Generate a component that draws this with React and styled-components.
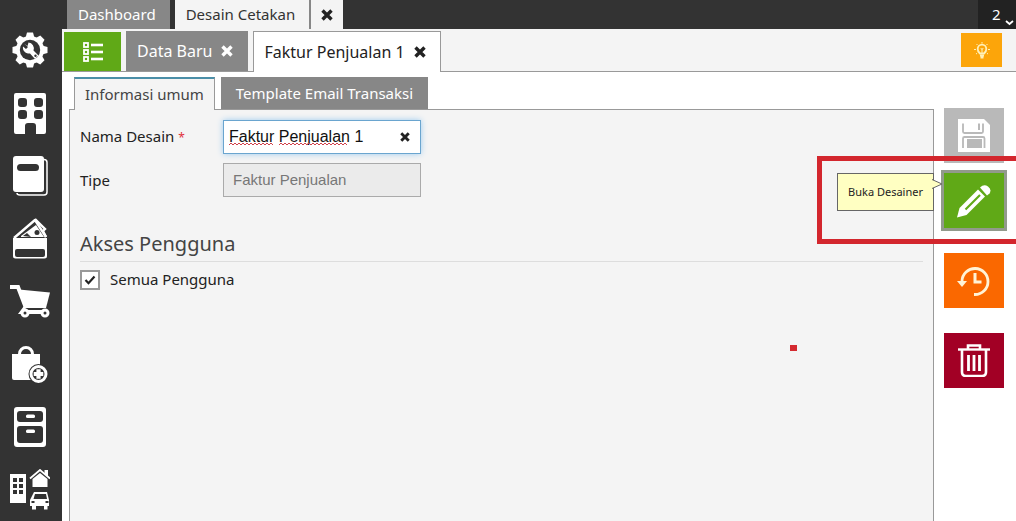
import React, { useState } from 'react'
import styled, { createGlobalStyle, css } from 'styled-components'

const GlobalStyle = createGlobalStyle`
    *, *::before, *::after { box-sizing: border-box; }
    body {
        margin: 0;
        background: #fff;
        color: #222;
        font-family: "Noto Sans", "Open Sans", sans-serif;
        font-size: 15px;
        line-height: 20px;
        overflow: hidden;
    }
    button, input { font: inherit; color: inherit; margin: 0; }
    button { border: 0; padding: 0; background: none; cursor: pointer; }
    svg { display: block; }
`;

const Layout = styled.div`
    display: flex;
    min-height: 100vh;
`;

const Sidebar = styled.nav`
    flex: 0 0 62px;
    height: 100vh;
    padding: 19px 3px 0 0;
    display: flex;
    flex-direction: column;
    background: #333;
    color: #fff;
`;

const SidebarButton = styled.button`
    flex: 1;
    display: flex;
    align-items: center;
    justify-content: center;
`;

const Main = styled.div`
    flex: 1;
    min-width: 0;
    display: flex;
    flex-direction: column;
`;

const TopBar = styled.header`
    display: flex;
    height: 29px;
    padding-left: 5px;
    background: #333;
`;

const TopTab = styled.button`
    padding: 0 14px 2px 11px;
    margin-right: ${props => props.$active ? '0' : '5px'};
    background: ${props => props.$active ? '#f4f4f4' : '#878787'};
    color: ${props => props.$active ? '#333' : '#fff'};
`;

const TopClose = styled.button`
    width: 34px;
    display: flex;
    align-items: center;
    justify-content: center;
    border-left: 2px solid #878787;
    background: #f4f4f4;
`;

const UserMenu = styled.button`
    width: 38px;
    margin-left: auto;
    padding: 0 2px 2px 14px;
    display: flex;
    align-items: center;
    justify-content: space-between;
    background: #222;
    color: #fff;
    svg { margin-top: 18px; }
`;

const TabBar = styled.div`
    display: flex;
    align-items: flex-end;
    gap: 5px;
    height: 43px;
    padding: 0 14px 0 2px;
    background: #f4f4f4;
    border-bottom: 1px solid #999;
`;

const ListButton = styled.button`
    width: 57px;
    height: 39px;
    display: flex;
    align-items: center;
    justify-content: center;
    background: #60a917;
    color: #fff;
`;

const DocTab = styled.div`
    display: flex;
    align-items: center;
    gap: 9px;
    height: 40px;
    padding: 0 15px 0 11px;
    font-size: 16px;
    background: #878787;
    color: #fff;
    ${props => props.$active && css`
        height: 41px;
        margin-bottom: -1px;
        padding: 0 14px 0 10px;
        border: 1px solid #999;
        border-bottom: 0;
        background: #fff;
        color: #222;
    `}
`;

const TipButton = styled.button`
    width: 41px;
    height: 34px;
    margin: 0 0 4px auto;
    display: flex;
    align-items: center;
    justify-content: center;
    background: #fca50a;
    color: #fff0b8;
`;

const Content = styled.main`
    flex: 1;
    display: flex;
    padding: 5px 12px 0 7px;
`;

const FormArea = styled.section`
    flex: 1;
    min-width: 0;
    display: flex;
    flex-direction: column;
`;

const SubTabs = styled.div`
    display: flex;
    gap: 6px;
    padding-left: 5px;
`;

const SubTab = styled.button`
    height: 32px;
    padding: 0 15px;
    background: #878787;
    color: #fff;
    ${props => props.$active && css`
        height: 33px;
        margin-bottom: -1px;
        padding: 0 10px 2px;
        border: 1px solid #999;
        border-top: 2px solid #4b8fa8;
        border-bottom: 0;
        background: #f4f4f4;
        color: #444;
        position: relative;
        z-index: 1;
    `}
`;

const Panel = styled.div`
    flex: 1;
    position: relative;
    padding: 10px 10px 0;
    border: 1px solid #999;
    border-bottom: 0;
    background: #f4f4f4;
`;

const FormRow = styled.div`
    display: grid;
    grid-template-columns: 143px 198px;
    align-items: center;
    margin-bottom: 9px;
`;

const Required = styled.span`
    color: #e0303a;
    font-size: 12px;
`;

const InputWrap = styled.div`
    position: relative;
`;

const TextInput = styled.input`
    display: block;
    width: 100%;
    height: 34px;
    padding: 0 32px 0 5px;
    border: 1px solid #6aa5cf;
    outline: 0;
    background: #fff;
    color: #111;
    font: 16px/20px "Liberation Sans", Arial, sans-serif;
    box-shadow: 0 0 6px #9ccbf0;
    &:disabled {
        padding: 0 9px 2px;
        border-color: #aaa;
        background: #ebebeb;
        color: #777;
        font-size: 15px;
        box-shadow: none;
    }
`;

const ClearButton = styled.button`
    position: absolute;
    top: 12px;
    right: 11px;
`;

const SpellMarks = styled.svg`
    position: absolute;
    top: 22px;
    left: 6px;
    pointer-events: none;
`;

const SectionTitle = styled.h2`
    margin: 33px 0 8px;
    padding-bottom: 3px;
    border-bottom: 1px solid #ddd;
    color: #444;
    font-size: 20px;
    line-height: 28px;
    font-weight: 400;
`;

const CheckLabel = styled.label`
    display: flex;
    align-items: flex-start;
    gap: 10px;
    line-height: 18px;
`;

const Checkbox = styled.input`
    appearance: none;
    width: 20px;
    height: 20px;
    border: 2px solid #999;
    background: #fff;
    &:checked {
        background: #fff url("data:image/svg+xml,%3Csvg xmlns='http://www.w3.org/2000/svg' viewBox='0 0 16 16'%3E%3Cpath d='M3.5 8l3 3.2L12.5 4.500' fill='none' stroke='%23222' stroke-width='2.200'/%3E%3C/svg%3E");
    }
`;

const Actions = styled.aside`
    display: flex;
    flex-direction: column;
    gap: 25px;
    margin: 31px 0 0 10px;
`;

const ActionButton = styled.button`
    width: 60px;
    height: 55px;
    display: flex;
    align-items: center;
    justify-content: center;
    background: ${props => props.$color};
    color: #fff;
    &:disabled { color: #fff; cursor: default; }
`;

const DesignerItem = styled.div`
    position: relative;
    margin-top: -15px;
    ${ActionButton} { outline: 3px solid #929a8c; }
`;

const Tooltip = styled.div`
    position: absolute;
    top: 0;
    right: 70px;
    height: 38px;
    padding: 0 10px;
    display: flex;
    align-items: center;
    border: 1px solid #666;
    background: #ffffc2;
    color: #222;
    font-size: 11px;
    white-space: nowrap;
    z-index: 2;
    svg {
        position: absolute;
        top: 4px;
        left: 100%;
        margin-left: -1px;
    }
`;

// runs past the right edge of the window
const Highlight = styled.div`
    position: absolute;
    top: -17px;
    right: -20px;
    width: 207px;
    height: 88px;
    border: 5px solid #d3262d;
    pointer-events: none;
    z-index: 1;
`;

const Marker = styled.span`
    position: absolute;
    top: 235px;
    right: 136px;
    width: 7px;
    height: 6px;
    background: #d42a30;
`;

const CrossIcon = ({ size = 12 }) => (
    <svg width={size} height={size} viewBox="0 0 12 12" aria-hidden="true">
        <path d="M1.500 1.500L10.500 10.500M10.500 1.500L1.500 10.500" stroke="currentColor" strokeWidth="3.4" />
    </svg>
);

const SettingsIcon = () => (
    <svg width="36" height="36" viewBox="0 0 36 36" fill="currentColor">
        {[0, 45, 90, 135].map(angle => (
            <path key={angle} d="M13.500 6L15 .5h6L22.500 6v24L21 35.500h-6L13.500 30z" transform={`rotate(${angle} 18 18)`} />
        ))}
        <circle cx="18" cy="18" r="14" />
        <circle cx="18" cy="18" r="10.200" fill="#333" />
        <path d="M12 11.500l3.500 2.500 1-3.500a6 6 0 0 1 5 8l5 5-3.500 3.500-5-5.500a6 6 0 0 1-7-7l3 2.500 2-2z" />
        <circle cx="23.500" cy="23.700" r="1.200" fill="#333" />
    </svg>
);

const BuildingIcon = () => (
    <svg width="34" height="41" viewBox="0 0 34 41">
        <path fill="currentColor" d="M3 0h28a2 2 0 0 1 2 2v37a2 2 0 0 1-2 2h-8v-8q0-3-3-3h-5q-3 0-3 3v8H3a2 2 0 0 1-2-2V2a2 2 0 0 1 2-2z" />
        <g fill="#333">
            <rect x="5" y="5" width="9" height="9" rx="3" />
            <rect x="21" y="5" width="9" height="9" rx="3" />
            <rect x="5" y="17" width="9" height="9" rx="3" />
            <rect x="21" y="17" width="9" height="9" rx="3" />
        </g>
    </svg>
);

const BookIcon = () => (
    <svg width="36" height="40" viewBox="0 0 36 40">
        <path d="M32 3.500q3 0 3 3V36q0 3-3 3H8q-3 0-3-2" fill="none" stroke="currentColor" strokeWidth="1.500" />
        <rect x="1" y="0" width="31" height="36" rx="3" fill="currentColor" />
        <rect x="5" y="8" width="22" height="7" rx="3.500" fill="#333" />
    </svg>
);

const WalletIcon = () => (
    <svg width="36" height="41" viewBox="0 0 36 41">
        <path d="M2 20L23 2l11 17" fill="none" stroke="currentColor" strokeWidth="2.400" strokeLinejoin="round" />
        <path d="M23 1l4 4 6 6-2 2 3 6" fill="none" stroke="currentColor" strokeWidth="2.400" />
        <path d="M9 18L24 7l8 12H9z" fill="currentColor" />
        <circle cx="25" cy="14.500" r="2.500" fill="#333" />
        <path d="M11 18l4-3 4 4z" fill="#333" />
        <path d="M1 20h34v18a2.500 2.500 0 0 1-2.500 2.500h-29A2.500 2.500 0 0 1 1 38z" fill="currentColor" />
        <rect x="3" y="31" width="30" height="8" rx="2" fill="#333" />
    </svg>
);

const CartIcon = () => (
    <svg width="42" height="34" viewBox="0 0 42 34">
        <path d="M1 3h8l8 21M16 24l-3 4h24" fill="none" stroke="currentColor" strokeWidth="4" />
        <path d="M10 5.500l31 3L37 24H15z" fill="currentColor" />
        <g fill="#333" stroke="currentColor" strokeWidth="3">
            <circle cx="16" cy="29" r="3" />
            <circle cx="36" cy="29" r="3" />
        </g>
    </svg>
);

const BagIcon = () => (
    <svg width="36" height="39" viewBox="0 0 36 39">
        <path d="M7.500 12V9a6.500 6.500 0 0 1 13 0v3" fill="none" stroke="currentColor" strokeWidth="3" />
        <path d="M0 9h28v26H2a2 2 0 0 1-2-2z" fill="currentColor" />
        <circle cx="26.500" cy="29" r="10" fill="#333" />
        <circle cx="26.500" cy="29" r="7.500" fill="#333" stroke="currentColor" strokeWidth="3" />
        <path d="M26.500 24.200v9.600M21.700 29h9.600" stroke="currentColor" strokeWidth="4.200" />
    </svg>
);

const CabinetIcon = () => (
    <svg width="34" height="40" viewBox="0 0 34 40">
        <rect x="1" y="0" width="32" height="40" rx="3" fill="currentColor" />
        <rect x="4" y="4" width="26" height="11" rx="3" fill="#333" />
        <rect x="4" y="19" width="26" height="17" rx="3" fill="#333" />
        <rect x="13" y="7.500" width="9" height="3.500" rx="1.500" fill="currentColor" />
        <rect x="13" y="22.500" width="9" height="3.500" rx="1.500" fill="currentColor" />
    </svg>
);

const AssetsIcon = () => (
    <svg width="40" height="41" viewBox="0 0 40 41">
        <path d="M0 5h16v29H0z" fill="currentColor" />
        <g fill="#333">
            {[9, 15, 21].map(y => <path key={y} d={`M3 ${y}h4v4H3zM9 ${y}h4v4H9z`} />)}
        </g>
        <path d="M20 9.500L30 1l10 8.500" fill="none" stroke="currentColor" strokeWidth="1.800" />
        <path d="M34.500 1H38v7l-3.500-3z" fill="currentColor" />
        <path d="M22.500 10L30 4l7.500 6v8h-15z" fill="currentColor" />
        <path d="M24 23h13l2 8v6h-1.500v3.500H34V37h-8v3.500h-4V37h-2v-6z" fill="currentColor" />
        <path d="M25 25h11l1 5H23.500z" fill="#333" />
        <path d="M21.500 32h3v2h-3zM35.500 32h3v2h-3z" fill="#333" />
    </svg>
);

const ListIcon = () => (
    <svg width="20" height="20" viewBox="0 0 20 20" fill="none" stroke="currentColor">
        {[1, 8, 15].map(y => (
            <React.Fragment key={y}>
                <rect x="1" y={y} width="4" height="4" strokeWidth="1.800" />
                <path d={`M8 ${y + 2}H20`} strokeWidth="2.600" />
            </React.Fragment>
        ))}
    </svg>
);

const BulbIcon = () => (
    <svg width="16" height="17" viewBox="0 0 16 17" fill="none" stroke="currentColor">
        <path d="M6 11.500Q3.500 9 3.700 7a4.300 4.300 0 0 1 8.600 0q.2 2-2.300 4.500z" strokeWidth="1.800" />
        <path d="M8 11V7M6.700 6L8 7.500 9.300 6" strokeWidth="1" />
        <path d="M6 13.500h4M6.500 15.500h3" strokeWidth="2" />
        <path d="M8 0v1.500M2.500 2l1 1M13.500 2l-1 1M0 7.500h2M14 7.500h2M2 12l1-.7M14 12l-1-.7" />
    </svg>
);

const SaveIcon = () => (
    <svg width="34" height="33" viewBox="0 0 34 33">
        <path d="M1 0h26l6 6v27H1z" fill="currentColor" />
        <path d="M6 4.500v8q0 1.500 1.500 1.500h17q1.500 0 1.500-1.500v-8M6 29V19.500q0-1.500 1.500-1.500h18.500q1.500 0 1.500 1.500V29" fill="none" stroke="#b9b9b9" strokeWidth="1.800" />
        <path d="M10 20h15v9H10zM21 4.500h2V11h-2z" fill="#b9b9b9" />
    </svg>
);

const PencilIcon = () => (
    <svg width="34" height="34" viewBox="0 0 34 34" fill="currentColor">
        <path d="M0 33.500L2.500 24 21 5.500l7 7L9.500 31z" />
        <path d="M23 3.500q4-4 8-1t1.500 7L30 11.500z" />
        <path d="M8.500 25.500L23 11" stroke="#60a917" strokeWidth="2.200" />
    </svg>
);

const HistoryIcon = () => (
    <svg width="34" height="30" viewBox="0 0 34 30" fill="none" stroke="#fff3d6">
        <path d="M5 15A13 13 0 1 1 18 28.500h-1" strokeWidth="2.800" />
        <path d="M0 15h10l-5 6z" fill="#fff3d6" stroke="none" />
        <path d="M18 7v9h6.500" strokeWidth="3" />
    </svg>
);

const TrashIcon = () => (
    <svg width="32" height="33" viewBox="0 0 32 33" fill="none" stroke="currentColor">
        <path d="M0 5.500h32" strokeWidth="2.400" />
        <path d="M10 5V1.500h12V5" strokeWidth="2.600" />
        <path d="M4 6v22q0 4 4 4h16q4 0 4-4V6" strokeWidth="2.600" />
        <path d="M10.500 11v16M16 11v16M21.500 11v16" strokeWidth="2.800" />
    </svg>
);

const menu = [
    { name: "Pengaturan", Icon: SettingsIcon },
    { name: "Perusahaan", Icon: BuildingIcon },
    { name: "Buku Besar", Icon: BookIcon },
    { name: "Kas & Bank", Icon: WalletIcon },
    { name: "Penjualan", Icon: CartIcon },
    { name: "Pembelian", Icon: BagIcon },
    { name: "Persediaan", Icon: CabinetIcon },
    { name: "Aset Tetap", Icon: AssetsIcon }
];

export default function App() {
    const [name, setName] = useState("Faktur Penjualan 1");
    const [allUsers, setAllUsers] = useState(true);

    return (
        <Layout>
            <GlobalStyle />
            <Sidebar>
                {menu.map(({ name, Icon }) => (
                    <SidebarButton key={name} aria-label={name}><Icon /></SidebarButton>
                ))}
            </Sidebar>
            <Main>
                <TopBar>
                    <TopTab>Dashboard</TopTab>
                    <TopTab $active>Desain Cetakan</TopTab>
                    <TopClose aria-label="Tutup"><CrossIcon /></TopClose>
                    <UserMenu>
                        2
                        <svg width="9" height="6" viewBox="0 0 9 6">
                            <path d="M1 1l3.500 3L8 1" fill="none" stroke="currentColor" strokeWidth="1.800" />
                        </svg>
                    </UserMenu>
                </TopBar>
                <TabBar>
                    <ListButton aria-label="Daftar"><ListIcon /></ListButton>
                    <DocTab>
                        Data Baru
                        <button aria-label="Tutup"><CrossIcon /></button>
                    </DocTab>
                    <DocTab $active>
                        Faktur Penjualan 1
                        <button aria-label="Tutup"><CrossIcon /></button>
                    </DocTab>
                    <TipButton aria-label="Bantuan"><BulbIcon /></TipButton>
                </TabBar>
                <Content>
                    <FormArea>
                        <SubTabs>
                            <SubTab $active>Informasi umum</SubTab>
                            <SubTab>Template Email Transaksi</SubTab>
                        </SubTabs>
                        <Panel>
                            <FormRow>
                                <label htmlFor="name">Nama Desain <Required>*</Required></label>
                                <InputWrap>
                                    <TextInput id="name" type="text" spellCheck="false" value={name} onChange={e => setName(e.target.value)} />
                                    {name === "Faktur Penjualan 1" && (
                                        <SpellMarks width="122" height="4" viewBox="0 0 122 4" fill="none" stroke="#d0404a">
                                            <path d={"M0 3" + "l2 -2l2 2".repeat(11)} />
                                            <path d={"M50 3" + "l2 -2l2 2".repeat(17)} />
                                        </SpellMarks>
                                    )}
                                    <ClearButton aria-label="Hapus" onClick={() => setName("")}><CrossIcon size={10} /></ClearButton>
                                </InputWrap>
                            </FormRow>
                            <FormRow>
                                <label htmlFor="type">Tipe</label>
                                <TextInput id="type" type="text" value="Faktur Penjualan" disabled readOnly />
                            </FormRow>
                            <SectionTitle>Akses Pengguna</SectionTitle>
                            <CheckLabel>
                                <Checkbox type="checkbox" checked={allUsers} onChange={e => setAllUsers(e.target.checked)} />
                                Semua Pengguna
                            </CheckLabel>
                            <Marker />
                        </Panel>
                    </FormArea>
                    <Actions>
                        <ActionButton $color="#b9b9b9" disabled aria-label="Simpan"><SaveIcon /></ActionButton>
                        <DesignerItem>
                            <ActionButton $color="#60a917" aria-label="Buka Desainer"><PencilIcon /></ActionButton>
                            <Tooltip role="tooltip">
                                Buka Desainer
                                <svg width="11" height="12" viewBox="0 0 11 12">
                                    <path d="M0 1.500L10 6 0 10.500" fill="#ffffc2" stroke="#666" />
                                </svg>
                            </Tooltip>
                            <Highlight />
                        </DesignerItem>
                        <ActionButton $color="#fa6800" aria-label="Riwayat"><HistoryIcon /></ActionButton>
                        <ActionButton $color="#a20025" aria-label="Hapus"><TrashIcon /></ActionButton>
                    </Actions>
                </Content>
            </Main>
        </Layout>
    )
}
